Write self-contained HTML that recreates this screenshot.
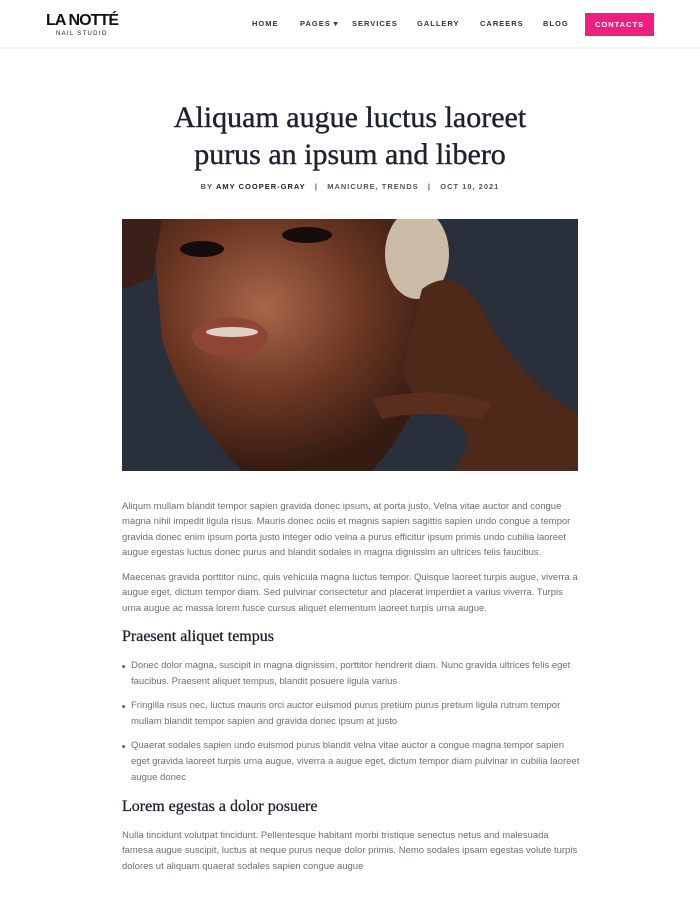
<!DOCTYPE html>
<html><head><meta charset="utf-8"><style>
*{margin:0;padding:0;box-sizing:border-box}
body{width:700px;height:900px;background:#fff;font-family:"Liberation Sans",sans-serif;color:#6c6f7a;overflow:hidden;position:relative}
.hdr{position:absolute;left:0;top:0;width:700px;height:49px;border-bottom:2px solid #f3f3f5}
.logo{position:absolute;left:46px;top:12px;font-weight:bold;font-size:16px;color:#111;letter-spacing:-0.9px}
.logo2{position:absolute;left:56px;top:31px;font-size:6px;color:#222;letter-spacing:1.3px}
.nav a{position:absolute;top:19px;font-size:7.5px;font-weight:bold;color:#333;letter-spacing:1px;text-decoration:none}
.btn{position:absolute;left:585px;top:13px;width:69px;height:23px;background:#f01f7e;color:#fff;font-size:7.5px;font-weight:bold;letter-spacing:1px;text-align:center;line-height:23px}
h1{position:absolute;left:145px;width:410px;top:99px;text-align:center;font-family:"Liberation Serif",serif;font-weight:normal;font-size:30px;line-height:37px;color:#1e2230;-webkit-text-stroke:0.4px #1e2230}
.meta{position:absolute;top:182px;left:0;width:700px;text-align:center;font-size:7.5px;font-weight:bold;letter-spacing:1px;color:#555}
.meta b{color:#222}
.img{position:absolute;left:122px;top:219px;width:456px;height:252px;background:#2b3140;overflow:hidden}
.txt{position:absolute;left:122px;width:458px;font-size:9.5px;line-height:15.4px}
h2{position:absolute;left:122px;font-family:"Liberation Serif",serif;font-weight:normal;font-size:16px;color:#1e2230;-webkit-text-stroke:0.3px #1e2230}
ul{list-style:none}
li{position:relative;padding-left:9px;margin-bottom:8px;line-height:16px}
li:before{content:"";position:absolute;left:0;top:7px;width:3px;height:3px;border-radius:50%;background:#666}
</style></head><body>
<div class="hdr">
<div class="logo">LA NOTTÉ</div><div class="logo2">NAIL STUDIO</div>
<div class="nav">
<a style="left:252px">HOME</a><a style="left:300px">PAGES ▾</a><a style="left:352px">SERVICES</a><a style="left:417px">GALLERY</a><a style="left:480px">CAREERS</a><a style="left:543px">BLOG</a>
</div>
<div class="btn">CONTACTS</div>
</div>
<h1>Aliquam augue luctus laoreet purus an ipsum and libero</h1>
<div class="meta">BY <b>AMY COOPER-GRAY</b> &nbsp; | &nbsp; MANICURE, TRENDS &nbsp; | &nbsp; OCT 10, 2021</div>
<div class="img">
<svg width="456" height="252" viewBox="0 0 456 252">
<defs><radialGradient id="s" cx="0.4" cy="0.35" r="0.65"><stop offset="0" stop-color="#a8664a"/><stop offset="0.55" stop-color="#6a3622"/><stop offset="1" stop-color="#351b12"/></radialGradient></defs>
<rect width="456" height="252" fill="#2a2f3c"/>
<path d="M30 0 L270 0 Q320 60 310 140 Q295 200 250 252 L120 252 Q60 190 40 120 Z" fill="url(#s)"/>
<ellipse cx="295" cy="35" rx="32" ry="45" fill="#c9bba6"/>
<path d="M300 70 Q340 40 370 110 Q410 170 456 195 L456 252 L330 252 Q360 220 330 200 Q285 180 280 150 Z" fill="#4e2818"/>
<path d="M250 180 Q320 165 370 185 L360 200 Q300 190 260 200 Z" fill="#5a2e1c"/>
<ellipse cx="108" cy="118" rx="38" ry="20" fill="#8e4634"/>
<ellipse cx="110" cy="113" rx="26" ry="5" fill="#e0cfc4"/>
<ellipse cx="80" cy="30" rx="22" ry="8" fill="#150d0c"/>
<ellipse cx="185" cy="16" rx="25" ry="8" fill="#150d0c"/>
<path d="M0 0 L40 0 L30 60 L0 70 Z" fill="#3a2018"/>
</svg>
</div>
<div class="txt" style="top:499px">Aliqum mullam blandit tempor sapien gravida donec ipsum, at porta justo. Velna vitae auctor and congue magna nihil impedit ligula risus. Mauris donec ociis et magnis sapien sagittis sapien undo congue a tempor gravida donec enim ipsum porta justo integer odio velna a purus efficitur ipsum primis undo cubilia laoreet augue egestas luctus donec purus and blandit sodales in magna dignissim an ultrices felis faucibus.</div>
<div class="txt" style="top:570px">Maecenas gravida porttitor nunc, quis vehicula magna luctus tempor. Quisque laoreet turpis augue, viverra a augue eget, dictum tempor diam. Sed pulvinar consectetur and placerat imperdiet a varius viverra. Turpis urna augue ac massa lorem fusce cursus aliquet elementum laoreet turpis urna augue.</div>
<h2 style="top:628px">Praesent aliquet tempus</h2>
<ul class="txt" style="top:658px">
<li>Donec dolor magna, suscipit in magna dignissim, porttitor hendrerit diam. Nunc gravida ultrices felis eget faucibus. Praesent aliquet tempus, blandit posuere ligula varius</li>
<li>Fringilla risus nec, luctus mauris orci auctor euismod purus pretium purus pretium ligula rutrum tempor mullam blandit tempor sapien and gravida donec ipsum at justo</li>
<li>Quaerat sodales sapien undo euismod purus blandit velna vitae auctor a congue magna tempor sapien eget gravida laoreet turpis urna augue, viverra a augue eget, dictum tempor diam pulvinar in cubilia laoreet augue donec</li>
</ul>
<h2 style="top:798px">Lorem egestas a dolor posuere</h2>
<div class="txt" style="top:828px">Nulla tincidunt volutpat tincidunt. Pellentesque habitant morbi tristique senectus netus and malesuada famesa augue suscipit, luctus at neque purus neque dolor primis. Nemo sodales ipsam egestas volute turpis dolores ut aliquam quaerat sodales sapien congue augue</div>
</body></html>
